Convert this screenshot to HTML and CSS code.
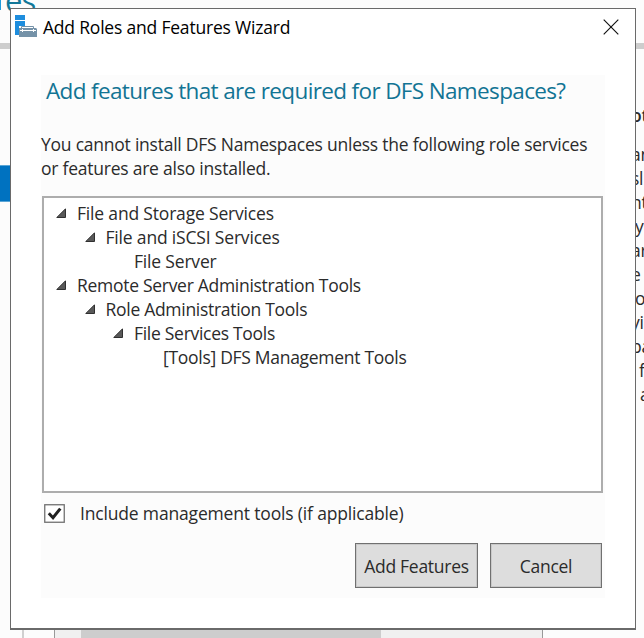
FILE: index.html
```html
<!DOCTYPE html>
<html lang="en">
<head>
<meta charset="utf-8">
<title>Add Roles and Features Wizard</title>
<link rel="stylesheet" href="styles.css">
</head>
<body>
<div class="backdrop">
  <div class="page-title"><span class="title-mark"></span>es</div>
  <div class="divider"></div>
  <div class="page-body">
    <div class="nav-selected"></div>
    <div class="description">
      <b>ot</b>
      <span>an</span><span>sl</span><span>nt</span><span class="in1">y</span><span>ar</span><span>e</span><span class="in1">o</span><span>yi</span><span>pa</span><span class="in2">f</span><span class="in3">a</span>
    </div>
  </div>
  <div class="list-bottom"><div class="scrollbar"><div class="thumb"></div></div></div>
</div>
<main class="dialog">
  <header class="titlebar">
    <svg class="app-icon" width="23" height="23" viewBox="0 0 23 23">
      <path d="M0 0H10V5H0ZM0 6H10V11H4V20H0Z" fill="#1e8ddd"/>
      <path d="M6.5 13V11.5H18.5V13" fill="none" stroke="#7592a8"/>
      <path d="M4 13H21L22 14V22H4Z" fill="#7592a8"/>
      <path d="M5 15.5H21M7.5 14V17M18.5 14V17" fill="none" stroke="#fff"/>
    </svg>
    <span class="caption">Add Roles and Features Wizard</span>
    <svg class="close" width="16" height="16" viewBox="0 0 16 16"><path d="M.7.7L15.3 15.3M15.3.7L.7 15.3" stroke="#111" stroke-width="1.15"/></svg>
  </header>
  <section class="panel">
    <h1>Add features that are required for DFS Namespaces?</h1>
    <p>You cannot install DFS Namespaces unless the following role services<br>or features are also installed.</p>
    <div class="tree">
      <div class="row l0"><svg class="arrow" viewBox="0 0 10 10"><path d="M9.5.8V9.5H.8Z"/></svg><span class="t1">File and Storage Services</span></div>
      <div class="row l1"><svg class="arrow" viewBox="0 0 10 10"><path d="M9.5.8V9.5H.8Z"/></svg><span class="t1">File and iSCSI Services</span></div>
      <div class="row l2"><i class="arrow"></i><span class="t1">File Server</span></div>
      <div class="row l0"><svg class="arrow" viewBox="0 0 10 10"><path d="M9.5.8V9.5H.8Z"/></svg><span>Remote Server Administration Tools</span></div>
      <div class="row l1"><svg class="arrow" viewBox="0 0 10 10"><path d="M9.5.8V9.5H.8Z"/></svg><span>Role Administration Tools</span></div>
      <div class="row l2"><svg class="arrow" viewBox="0 0 10 10"><path d="M9.5.8V9.5H.8Z"/></svg><span>File Services Tools</span></div>
      <div class="row l3"><i class="arrow"></i><span>[Tools] DFS Management Tools</span></div>
    </div>
    <div class="option">
      <svg class="check" width="21" height="19" viewBox="0 0 21 19"><rect x=".75" y=".75" width="19.5" height="17.5" fill="#fff" stroke="#707070" stroke-width="1.3"/><path d="M4.8 9.3L9 13.7L16.3 4.6" fill="none" stroke="#212121" stroke-width="3"/></svg>
      <span>Include management tools (if applicable)</span>
    </div>
    <div class="actions">
      <button class="add">Add Features</button>
      <button class="cancel">Cancel</button>
    </div>
  </section>
</main>
</body>
</html>
```
FILE: styles.css
```css
* { box-sizing: border-box; }
body {
  margin: 0;
  width: 644px;
  height: 638px;
  overflow: hidden;
  position: relative;
  font: 17.5px/24px "Open Sans", "Noto Sans", sans-serif;
  letter-spacing: -.235px;
  color: #2b2b2b;
}
.backdrop { height: 638px; background: #fcfcfc; display: flex; flex-direction: column; overflow: hidden; }
.page-title { display: flex; gap: 4px; height: 43px; font-size: 31px; line-height: 0; color: #127899; letter-spacing: -1px; }
.title-mark { width: 1px; height: 10px; background: #1e9bdc; }
.divider { height: 6px; flex: none; background: #cdcdcd; }
.page-body { height: 580px; display: flex; justify-content: space-between; }
.nav-selected { width: 11px; height: 37px; margin-top: 116px; background: #0072c0; border: solid #5aa5d5; border-width: 1px 0; }
.description { width: 13px; padding-top: 54px; display: flex; flex-direction: column; white-space: nowrap; }
.description b { margin-bottom: 15px; font-weight: 600; }
.description span { height: 24px; }
.description .in1 { padding-left: 4px; }
.description .in2 { padding-left: 8px; }
.description .in3 { padding-left: 9px; }
.list-bottom { flex: none; height: 9px; margin-left: 22px; border-left: 2px solid #d0d0d0; padding-left: 30px; }
.scrollbar { width: 489px; height: 9px; background: #f0f0f0; border: solid #999; border-width: 0 1px; padding-left: 26px; }
.thumb { width: 300px; height: 9px; background: #cdcdcd; }

.dialog {
  position: absolute;
  left: 10px;
  top: 8px;
  width: 626px;
  height: 622px;
  background: #fff;
  border: 1px solid #6a6a6a;
  border-bottom-width: 2px;
}
.titlebar { height: 66px; padding: 6px 16.5px 0 4px; display: flex; align-items: flex-start; color: #000; }
.caption { margin: 0 auto 0 5px; letter-spacing: -.2px; }
.close { margin-top: 3.5px; }
.panel { width: 564px; height: 523px; margin-left: 30px; background: #fcfcfc; padding: 0 2px 0 1px; }
h1 { margin: 0; padding: 1px 0 0 4px; height: 57px; font-size: 22.5px; line-height: 30px; font-weight: 400; letter-spacing: -.64px; color: #127494; white-space: nowrap; }
p { margin: 0 0 0 -1px; height: 64px; white-space: nowrap; }
.tree { height: 297px; width: 561px; border: 2px solid #adadad; background: #fff; padding: 3px 0 0 12px; letter-spacing: -.29px; }
.row { height: 24px; display: flex; align-items: center; white-space: nowrap; }
.t1 { letter-spacing: -.18px; }
.l1 { padding-left: 28.5px; }
.l2 { padding-left: 57px; }
.l3 { padding-left: 86px; }
.arrow { width: 10px; height: 10px; margin-right: 11px; flex: none; fill: #595959; stroke: #303030; stroke-width: 1; }
.option { height: 50px; padding: 8px 0 0 2px; display: flex; align-items: flex-start; white-space: nowrap; letter-spacing: -.17px; }
.check { margin: 3px 15px 0 0; }
.actions { display: flex; justify-content: flex-end; gap: 12px; padding-right: 1px; }
button { height: 45px; border: 1px solid #707070; background: #ddd; box-shadow: inset 0 0 0 1px #c9c9c9; padding: 0; font: inherit; color: inherit; white-space: nowrap; letter-spacing: -.27px; }
.add { width: 123px; }
.cancel { width: 112px; }
```
